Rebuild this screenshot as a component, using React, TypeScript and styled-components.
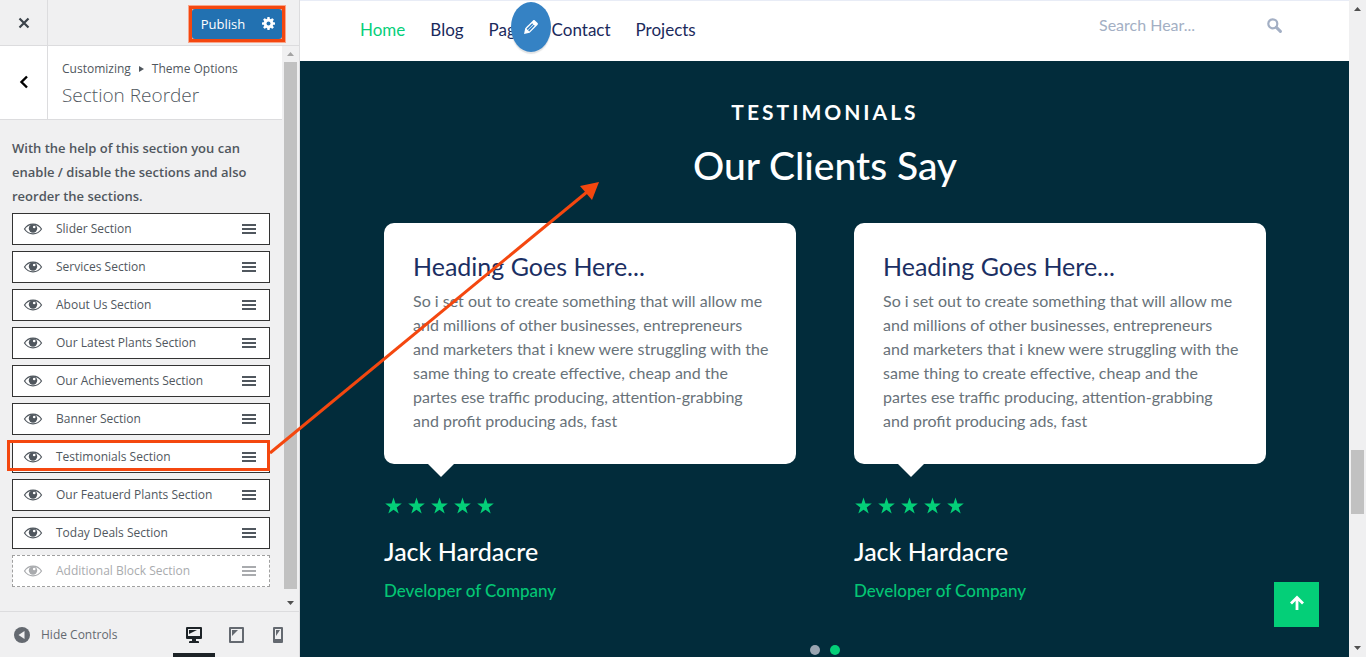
import React from 'react';
import styled, { createGlobalStyle } from 'styled-components';

const Global = createGlobalStyle`
  *, *::before, *::after { box-sizing: border-box; }
  html, body, #root { height: 100%; }
  body { margin: 0; overflow: hidden; }
  h1, h2, h3, p, ul { margin: 0; padding: 0; }
  ul { list-style: none; }
  button, input { font: inherit; border: 0; margin: 0; padding: 0; background: none; color: inherit; }
  a { color: inherit; text-decoration: none; }
  svg { display: block; }
`;

const Shell = styled.div`
  position: relative;
  display: flex;
  height: 100vh;
`;

/* ---------- customizer sidebar ---------- */

const Sidebar = styled.aside`
  display: flex;
  flex-direction: column;
  flex: 0 0 300px;
  background: #f0f0f1;
  border-right: 1px solid #dcdcde;
  font: 13px/20px 'Open Sans', 'Noto Sans', sans-serif;
  color: #50575e;
`;

const TopBar = styled.header`
  display: flex;
  align-items: stretch;
  justify-content: space-between;
  flex: 0 0 46px;
  border-bottom: 1px solid #dcdcde;
`;

const SquareButton = styled.button`
  display: flex;
  align-items: center;
  justify-content: center;
  width: 48px;
  flex: none;
  border-right: 1px solid #dcdcde;
  color: #3c434a;
`;

const Highlight = styled.div`
  display: flex;
  align-self: center;
  height: 36px;
  margin: 2px 14px 0 0;
  border: 3px solid #f4470f;
  box-shadow: 0 0 0 1px #f9a58a;
  background: #f9a58a;
`;

const PublishButton = styled.button`
  width: 62px;
  background: #2271b1;
  border-radius: 3px 0 0 3px;
  color: #fff;
`;

const GearButton = styled.button`
  display: flex;
  align-items: center;
  justify-content: center;
  width: 28px;
  background: #2271b1;
  border-radius: 0 3px 3px 0;
  color: #fff;
`;

const PanelBody = styled.div`
  display: flex;
  flex: 1;
  min-height: 0;
`;

const PanelMain = styled.div`
  flex: 1;
  min-width: 0;
`;

const TitleBar = styled.div`
  display: flex;
  height: 74px;
  background: #fff;
  border-bottom: 1px solid #dcdcde;
`;

const TitleText = styled.div`
  padding: 13px 0 0 14px;
  white-space: nowrap;
`;

const Crumbs = styled.p`
  display: flex;
  align-items: center;
  gap: 8px;
  font-size: 12px;
`;

const PanelTitle = styled.h1`
  font-weight: 300;
  font-size: 19px;
  line-height: 32px;
`;

const Help = styled.p`
  padding: 16px 12px 5px;
  font-weight: 600;
  line-height: 24px;
  white-space: nowrap;
`;

const SectionList = styled.ul`
  display: flex;
  flex-direction: column;
  gap: 6px;
  padding: 0 12px;
`;

const SectionRow = styled.li<{ $off?: boolean }>`
  display: flex;
  align-items: center;
  height: 32px;
  padding: 0 13px 0 10px;
  background: #fff;
  border: 1px ${p => (p.$off ? 'dashed #a0a0a0' : 'solid #333')};
  color: ${p => (p.$off ? '#a9abae' : '#50575e')};
`;

const SectionName = styled.span`
  flex: 1;
  padding-left: 13px;
  font-size: 12px;
  white-space: nowrap;
`;

const Track = styled.div<{ $edge: number }>`
  display: flex;
  flex-direction: column;
  align-items: center;
  flex: 0 0 17px;
  background: #f0f0f1;
  padding: ${p => p.$edge}px 0;
`;

const Thumb = styled.div<{ $w: number }>`
  width: ${p => p.$w}px;
  background: #c1c1c1;
`;

const SideThumb = styled(Thumb)`
  flex: 1;
  margin: 6px 0 12px;
`;

const PanelFooter = styled.footer`
  display: flex;
  justify-content: space-between;
  flex: 0 0 46px;
  border-top: 1px solid #dcdcde;
  color: #646970;
`;

const HideButton = styled.button`
  display: flex;
  align-items: center;
  gap: 11px;
  padding-left: 14px;
  font-size: 12px;
`;

const Devices = styled.div`
  display: flex;
`;

const DeviceButton = styled.button<{ $on?: boolean }>`
  display: flex;
  align-items: center;
  justify-content: center;
  width: 42px;
  border-bottom: 4px solid ${p => (p.$on ? '#1d2327' : 'transparent')};
  padding-top: 4px;
  color: ${p => (p.$on ? '#1d2327' : '#646970')};
`;

/* ---------- site preview ---------- */

const Preview = styled.div`
  display: flex;
  flex: 1;
  min-width: 0;
  font: 16px/24px Lato, sans-serif;
`;

const Page = styled.div`
  position: relative;
  display: flex;
  flex-direction: column;
  flex: 1;
  min-width: 0;
  background: #022c3b;
`;

const SiteHeader = styled.header`
  display: flex;
  justify-content: space-between;
  flex: 0 0 61px;
  padding: 0 67px 0 60px;
  background: #fff;
  border-top: 1px solid #e8ecf6;
`;

const Nav = styled.nav`
  display: flex;
  align-items: center;
  gap: 25px;
  height: 58px;
  font-size: 17px;
`;

const NavLink = styled.a<{ $on?: boolean }>`
  color: ${p => (p.$on ? '#06cf7a' : '#1b2a5c')};
`;

const NavSlot = styled.span`
  position: relative;
  display: flex;
  width: 38px;
`;

const EditBadge = styled.button`
  position: absolute;
  left: 22px;
  top: -16px;
  display: flex;
  align-items: center;
  justify-content: center;
  width: 40px;
  height: 50px;
  border-radius: 50%;
  background: #3582c4;
  color: #fff;
  box-shadow: 0 2px 1px rgba(60, 67, 74, 0.15);
`;

const Search = styled.form`
  display: flex;
  align-items: center;
  height: 48px;
`;

const SearchInput = styled.input`
  width: 168px;
  color: #a3afc4;
  outline: 0;
  &::placeholder { color: #a3afc4; opacity: 1; }
`;

const SearchButton = styled.button`
  color: #a3afc4;
`;

const Testimonials = styled.section`
  display: flex;
  flex-direction: column;
  align-items: center;
  padding: 39px 83px 0 84px;
  color: #fff;
`;

const Kicker = styled.p`
  font-weight: 700;
  font-size: 21px;
  letter-spacing: 3px;
`;

const Title = styled.h2`
  padding: 14px 0 31px;
  font-weight: 500;
  font-size: 39px;
  line-height: 54px;
`;

const Cards = styled.div`
  display: grid;
  grid-template-columns: repeat(2, minmax(0, 1fr));
  gap: 58px;
  width: 100%;
`;

const Bubble = styled.div`
  position: relative;
  height: 241px;
  padding: 28px 25px 28px 29px;
  background: #fff;
  border-radius: 10px;
  &::after {
    content: '';
    position: absolute;
    top: 100%;
    left: 44px;
    border: 13px solid transparent;
    border-top-color: #fff;
    border-bottom: 0;
  }
`;

const BubbleTitle = styled.h3`
  padding-bottom: 8px;
  font-weight: 400;
  font-size: 25px;
  line-height: 30px;
  color: #1b2f63;
`;

const Quote = styled.p`
  color: #687279;
  white-space: nowrap;
`;

const Stars = styled.div`
  display: flex;
  gap: 5px;
  padding: 33px 0 0 0;
  color: #04cf78;
`;

const Person = styled.p`
  padding-top: 21px;
  font-weight: 500;
  font-size: 25px;
  line-height: 30px;
`;

const Role = styled.p`
  padding-top: 13px;
  font-weight: 500;
  font-size: 17px;
  color: #04c574;
`;

const Dots = styled.div`
  display: flex;
  gap: 10px;
  padding-top: 42px;
`;

const Dot = styled.button<{ $on?: boolean }>`
  width: 10px;
  height: 10px;
  border-radius: 50%;
  background: ${p => (p.$on ? '#04cf78' : '#9aa5b1')};
`;

const ToTop = styled.button`
  position: absolute;
  right: 30px;
  bottom: 30px;
  display: flex;
  align-items: center;
  justify-content: center;
  width: 45px;
  height: 45px;
  padding-bottom: 3px;
  background: #04cf78;
  color: #fff;
`;

const PageTrack = styled(Track)`
  justify-content: space-between;
`;

const PageThumb = styled(Thumb)`
  height: 64px;
  margin-top: auto;
  margin-bottom: 132px;
`;

const Annotation = styled.svg`
  position: absolute;
  inset: 0;
  pointer-events: none;
`;

/* ---------- icons ---------- */

const Eye = () => (
  <svg width="20" height="14" viewBox="0 0 20 14" aria-hidden="true">
    <path d="M1.500 7C5.500 0.400 14.500 0.400 18.500 7C14.500 13.400 5.500 13.400 1.500 7Z" fill="none" stroke="currentColor" strokeWidth="1.200" />
    <circle cx="10" cy="6.500" r="4.200" fill="currentColor" />
    <circle cx="11.200" cy="5" r="1.300" fill="#fff" />
  </svg>
);

const Bars = () => (
  <svg width="14" height="10" viewBox="0 0 14 10" fill="currentColor" aria-hidden="true">
    <path d="M0 0h14v2H0zM0 4h14v2H0zM0 8h14v2H0z" />
  </svg>
);

const Close = () => (
  <svg width="12" height="12" viewBox="0 0 12 12" aria-hidden="true">
    <path d="M1.500 1.500l9 9M10.500 1.500l-9 9" stroke="currentColor" strokeWidth="2.200" />
  </svg>
);

const Back = () => (
  <svg width="10" height="16" viewBox="0 0 10 16" aria-hidden="true">
    <path d="M8 1.500L2.500 7L8 12.500" fill="none" stroke="#000" strokeWidth="2.400" />
  </svg>
);

const Gear = () => (
  <svg width="13" height="13" viewBox="0 0 20 20" aria-hidden="true">
    <g fill="currentColor">
      {[0, 45, 90, 135].map(a => (
        <rect key={a} x="8" y="0" width="4" height="20" rx="1" transform={`rotate(${a} 10 10)`} />
      ))}
      <circle cx="10" cy="10" r="7.500" />
    </g>
    <circle cx="10" cy="10" r="3" fill="#2271b1" />
  </svg>
);

const Pencil = () => (
  <svg width="20" height="20" viewBox="0 0 20 20" fill="currentColor" aria-hidden="true">
    <path d="M13.890 3.390l2.710 2.720c.46.46.42 1.240.03 1.640l-8.010 8.020-5.560 1.160 1.160-5.580s7.600-7.630 7.990-8.030c.39-.39 1.220-.39 1.680.07zm-2.730 2.790l-5.590 5.610 1.110 1.110 5.540-5.650zm-2.970 8.230l5.580-5.600-1.070-1.080-5.590 5.600z" />
  </svg>
);

const Magnifier = () => (
  <svg width="15" height="15" viewBox="0 0 15 15" fill="none" stroke="currentColor" aria-hidden="true">
    <circle cx="5.800" cy="5.800" r="4.500" strokeWidth="2.200" />
    <path d="M9.400 9.400l4 4" strokeWidth="3" strokeLinecap="round" />
  </svg>
);

const Star = () => (
  <svg width="18" height="18" viewBox="0 0 18 18" fill="currentColor" aria-hidden="true">
    <path d="M9.500 0.500l2 6.100h6.300l-5.100 3.800 2 6.200-5.200-3.800-5.200 3.800 2-6.200L1.200 6.600h6.300z" />
  </svg>
);

const Arrow = () => (
  <svg width="16" height="16" viewBox="0 0 16 16" fill="none" stroke="currentColor" aria-hidden="true">
    <path d="M8 15V3M2 8.500l6-6 6 6" strokeWidth="2.800" />
  </svg>
);

const Tri = ({ d, c }: { d: 'up' | 'down'; c: string }) => (
  <svg width="7" height="4" viewBox="0 0 7 4" fill={c} aria-hidden="true">
    <path d={d === 'up' ? 'M3.500 0L7 4H0z' : 'M0 0h7L3.500 4z'} />
  </svg>
);

const Collapse = () => (
  <svg width="16" height="16" viewBox="0 0 16 16" aria-hidden="true">
    <circle cx="8" cy="8" r="8" fill="#646970" />
    <path d="M10.500 4v8L4.500 8z" fill="#f0f0f1" />
  </svg>
);

const Desktop = () => (
  <svg width="16" height="16" viewBox="0 0 16 16" fill="currentColor" aria-hidden="true">
    <path fillRule="evenodd" d="M1 0h14q1 0 1 1v10q0 1-1 1h-5v2h2q1 0 1 1v1H3v-1q0-1 1-1h2v-2H1q-1 0-1-1V1q0-1 1-1zM2 2v7h12V2z" />
    <path d="M3 3h8L3 7z" />
  </svg>
);

const Tablet = () => (
  <svg width="15" height="16" viewBox="0 0 15 16" fill="currentColor" aria-hidden="true">
    <path fillRule="evenodd" d="M1 0h13q1 0 1 1v14q0 1-1 1H1q-1 0-1-1V1q0-1 1-1zM2 2v12h11V2z" />
    <path d="M3 3h6L3 9z" />
  </svg>
);

const Phone = () => (
  <svg width="10" height="16" viewBox="0 0 10 16" fill="currentColor" aria-hidden="true">
    <path fillRule="evenodd" d="M1 0h8q1 0 1 1v14q0 1-1 1H1q-1 0-1-1V1q0-1 1-1zM2 2v10h6V2z" />
    <path d="M3 3h4L3 9z" />
  </svg>
);

const sections = [
  'Slider Section',
  'Services Section',
  'About Us Section',
  'Our Latest Plants Section',
  'Our Achievements Section',
  'Banner Section',
  'Testimonials Section',
  'Our Featuerd Plants Section',
  'Today Deals Section',
  'Additional Block Section',
];

const quote = [
  'So i set out to create something that will allow me',
  'and millions of other businesses, entrepreneurs',
  'and marketers that i knew were struggling with the',
  'same thing to create effective, cheap and the',
  'partes ese traffic producing, attention-grabbing',
  'and profit producing ads, fast',
];

const Testimonial = () => (
  <article>
    <Bubble>
      <BubbleTitle>Heading Goes Here...</BubbleTitle>
      <Quote>
        {quote.map(line => (
          <React.Fragment key={line}>{line}<br /></React.Fragment>
        ))}
      </Quote>
    </Bubble>
    <Stars>{[1, 2, 3, 4, 5].map(n => <Star key={n} />)}</Stars>
    <Person>Jack Hardacre</Person>
    <Role>Developer of Company</Role>
  </article>
);

export default function App() {
  return (
    <Shell>
      <Global />
      <Sidebar>
        <TopBar>
          <SquareButton aria-label="Close"><Close /></SquareButton>
          <Highlight>
            <PublishButton>Publish</PublishButton>
            <GearButton aria-label="Publish settings"><Gear /></GearButton>
          </Highlight>
        </TopBar>
        <PanelBody>
          <PanelMain>
            <TitleBar>
              <SquareButton aria-label="Back"><Back /></SquareButton>
              <TitleText>
                <Crumbs>
                  Customizing
                  <svg width="5" height="6" viewBox="0 0 5 6" aria-hidden="true"><path d="M0 0l5 3-5 3z" fill="#50575e" /></svg>
                  Theme Options
                </Crumbs>
                <PanelTitle>Section Reorder</PanelTitle>
              </TitleText>
            </TitleBar>
            <Help>
              With the help of this section you can<br />
              enable / disable the sections and also<br />
              reorder the sections.
            </Help>
            <SectionList>
              {sections.map((name, i) => (
                <SectionRow key={name} $off={i === sections.length - 1}>
                  <Eye />
                  <SectionName>{name}</SectionName>
                  <Bars />
                </SectionRow>
              ))}
            </SectionList>
          </PanelMain>
          <Track $edge={6}>
            <Tri d="up" c="#a3a3a3" />
            <SideThumb $w={13} />
            <Tri d="down" c="#505050" />
          </Track>
        </PanelBody>
        <PanelFooter>
          <HideButton><Collapse />Hide Controls</HideButton>
          <Devices>
            <DeviceButton $on aria-label="Desktop"><Desktop /></DeviceButton>
            <DeviceButton aria-label="Tablet"><Tablet /></DeviceButton>
            <DeviceButton aria-label="Mobile"><Phone /></DeviceButton>
          </Devices>
        </PanelFooter>
      </Sidebar>

      <Preview>
        <Page>
          <SiteHeader>
            <Nav>
              <NavLink href="#" $on>Home</NavLink>
              <NavLink href="#">Blog</NavLink>
              <NavSlot>
                <NavLink href="#">Page</NavLink>
                <EditBadge aria-label="Edit menu"><Pencil /></EditBadge>
              </NavSlot>
              <NavLink href="#">Contact</NavLink>
              <NavLink href="#">Projects</NavLink>
            </Nav>
            <Search onSubmit={e => e.preventDefault()}>
              <SearchInput aria-label="Search" placeholder="Search Hear..." />
              <SearchButton aria-label="Search"><Magnifier /></SearchButton>
            </Search>
          </SiteHeader>
          <Testimonials>
            <Kicker>TESTIMONIALS</Kicker>
            <Title>Our Clients Say</Title>
            <Cards>
              <Testimonial />
              <Testimonial />
            </Cards>
            <Dots>
              <Dot aria-label="Slide 1" />
              <Dot $on aria-label="Slide 2" />
            </Dots>
          </Testimonials>
          <ToTop aria-label="Back to top"><Arrow /></ToTop>
        </Page>
        <PageTrack $edge={7}>
          <Tri d="up" c="#505050" />
          <PageThumb $w={13} />
          <Tri d="down" c="#505050" />
        </PageTrack>
      </Preview>

      <Annotation width="620" height="657" viewBox="0 0 620 657" aria-hidden="true">
        <rect x="8.500" y="441.500" width="260" height="28" fill="none" stroke="#f4470f" strokeWidth="3" />
        <path d="M270 453L587 192" stroke="#f4470f" strokeWidth="3" />
        <path d="M599 182L592 200L580 186z" fill="#f4470f" />
      </Annotation>
    </Shell>
  );
}
